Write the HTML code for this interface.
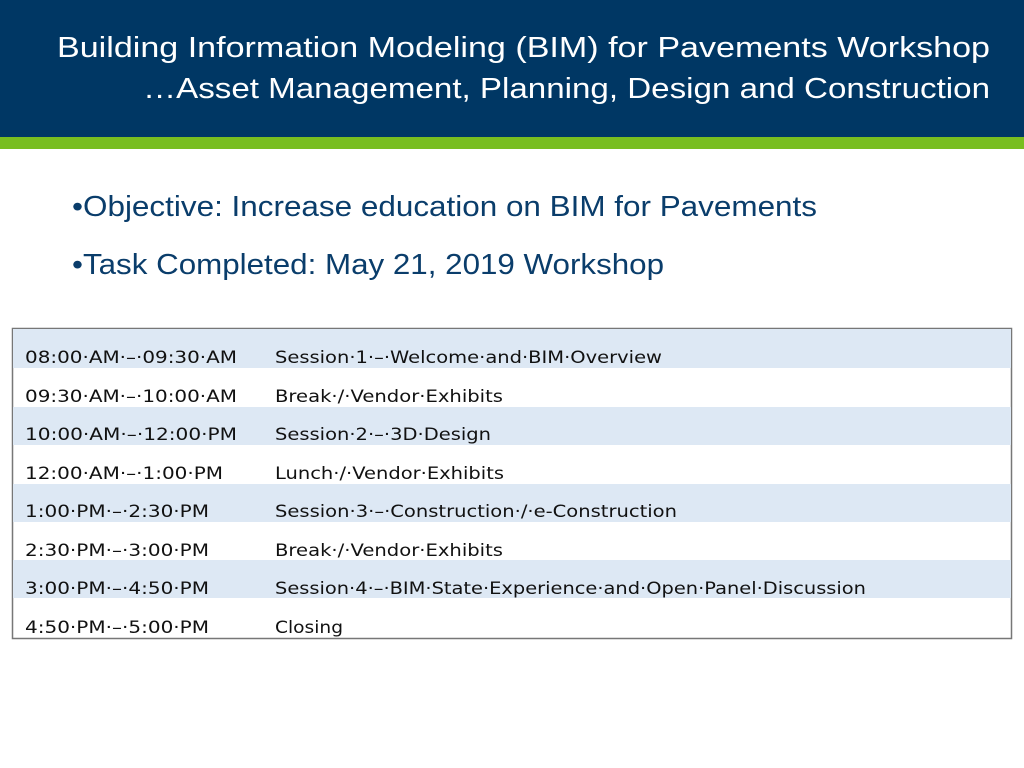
<!DOCTYPE html>
<html><head><meta charset="utf-8"><style>
html,body{margin:0;padding:0;width:1024px;height:768px;overflow:hidden;background:#fff}
svg{display:block}
</style></head><body>
<svg width="1024" height="768" xmlns="http://www.w3.org/2000/svg">
<rect x="0" y="0" width="1024" height="137" fill="#003764"/>
<rect x="0" y="137" width="1024" height="12" fill="#78be20"/>
<g font-family="Liberation Sans, sans-serif" fill="#ffffff" font-size="29">
<text x="57" y="57" textLength="933" lengthAdjust="spacingAndGlyphs">Building Information Modeling (BIM) for Pavements Workshop</text>
<text x="143" y="98" textLength="847" lengthAdjust="spacingAndGlyphs">…Asset Management, Planning, Design and Construction</text>
</g>
<g font-family="Liberation Sans, sans-serif" fill="#0a3d6b" font-size="29">
<text x="72" y="216" textLength="745" lengthAdjust="spacingAndGlyphs">•Objective:  Increase education on BIM for Pavements</text>
<text x="72" y="274" textLength="592" lengthAdjust="spacingAndGlyphs">•Task Completed:  May 21, 2019 Workshop</text>
</g>
<rect x="12.5" y="328.5" width="999" height="310" fill="#fff" stroke="#777" stroke-width="1.5"/>
<g fill="#dde8f4">
<rect x="13" y="329" width="998" height="39"/>
<rect x="13" y="407" width="998" height="38"/>
<rect x="13" y="484" width="998" height="38"/>
<rect x="13" y="560" width="998" height="38"/>
</g>
<g font-family="DejaVu Sans, sans-serif" fill="#111" font-size="17">
<text x="25" y="363" textLength="212" lengthAdjust="spacingAndGlyphs">08:00·AM·–·09:30·AM</text>
<text x="275" y="363" textLength="387" lengthAdjust="spacingAndGlyphs">Session·1·–·Welcome·and·BIM·Overview</text>
<text x="25" y="402" textLength="212" lengthAdjust="spacingAndGlyphs">09:30·AM·–·10:00·AM</text>
<text x="275" y="402" textLength="228" lengthAdjust="spacingAndGlyphs">Break·/·Vendor·Exhibits</text>
<text x="25" y="440" textLength="212" lengthAdjust="spacingAndGlyphs">10:00·AM·–·12:00·PM</text>
<text x="275" y="440" textLength="216" lengthAdjust="spacingAndGlyphs">Session·2·–·3D·Design</text>
<text x="25" y="479" textLength="198" lengthAdjust="spacingAndGlyphs">12:00·AM·–·1:00·PM</text>
<text x="275" y="479" textLength="229" lengthAdjust="spacingAndGlyphs">Lunch·/·Vendor·Exhibits</text>
<text x="25" y="517" textLength="184" lengthAdjust="spacingAndGlyphs">1:00·PM·–·2:30·PM</text>
<text x="275" y="517" textLength="402" lengthAdjust="spacingAndGlyphs">Session·3·–·Construction·/·e-Construction</text>
<text x="25" y="556" textLength="184" lengthAdjust="spacingAndGlyphs">2:30·PM·–·3:00·PM</text>
<text x="275" y="556" textLength="228" lengthAdjust="spacingAndGlyphs">Break·/·Vendor·Exhibits</text>
<text x="25" y="594" textLength="184" lengthAdjust="spacingAndGlyphs">3:00·PM·–·4:50·PM</text>
<text x="275" y="594" textLength="591" lengthAdjust="spacingAndGlyphs">Session·4·–·BIM·State·Experience·and·Open·Panel·Discussion</text>
<text x="25" y="633" textLength="184" lengthAdjust="spacingAndGlyphs">4:50·PM·–·5:00·PM</text>
<text x="275" y="633" textLength="68" lengthAdjust="spacingAndGlyphs">Closing</text>
</g>
</svg>
</body></html>
